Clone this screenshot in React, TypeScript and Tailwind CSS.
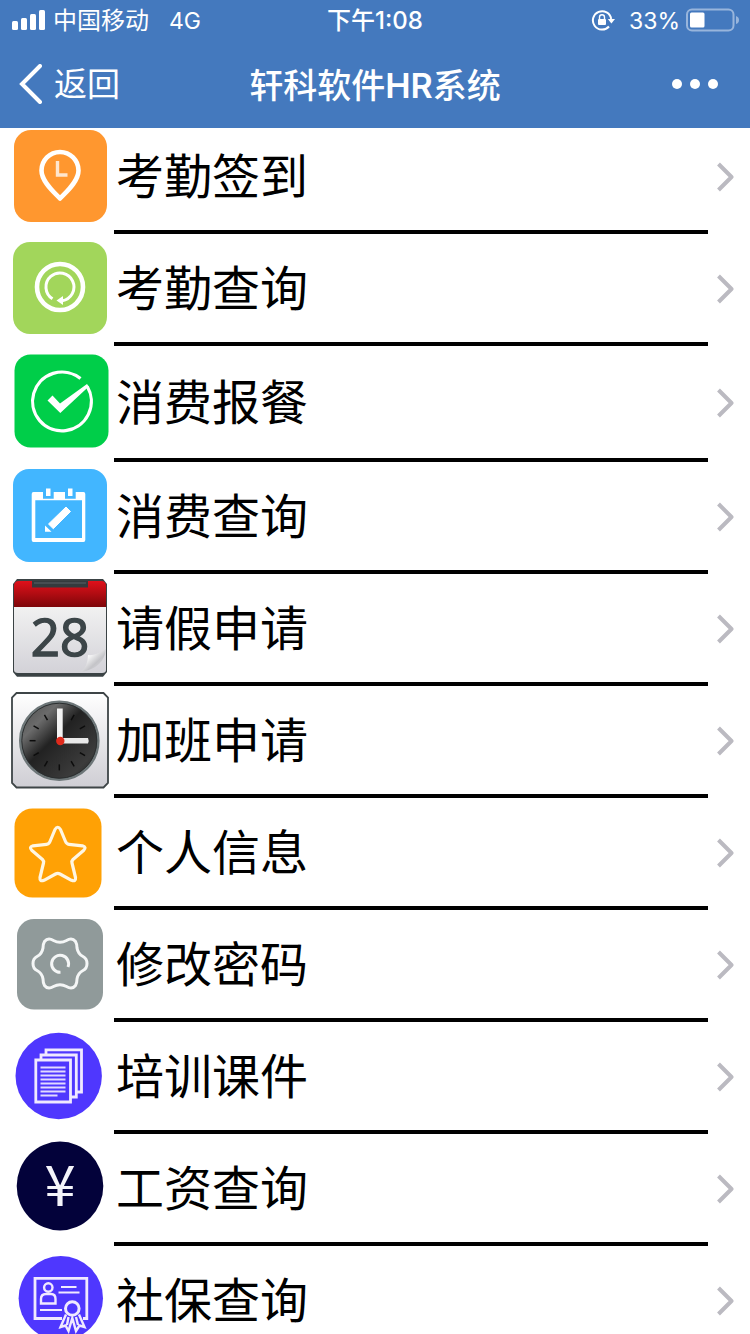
import type { ReactNode } from 'react'

function Icon({ children }: { children: ReactNode }) {
  return (
    <svg viewBox="0 0 100 100" className="size-[100px]" fill="none" aria-hidden="true">
      {children}
    </svg>
  )
}

const signInIcon = (
  <Icon>
    <rect x="4" y="4" width="93" height="92" rx="17" fill="#ff972f" />
    <path
      d="M50 72.5C45 67 31.5 56 31.5 44.5A18.5 18.5 0 0 1 68.5 44.5C68.5 56 55 67 50 72.5Z"
      stroke="#fff"
      strokeWidth="4.6"
      strokeLinejoin="round"
    />
    <path d="M47.5 35V49H57.5" stroke="#ffe6cd" strokeWidth="3.4" />
  </Icon>
)

const attendanceIcon = (
  <Icon>
    <rect x="3" y="4" width="94" height="92" rx="17" fill="#a2d65b" />
    <circle cx="50" cy="49" r="23" stroke="#fff" strokeWidth="4.6" />
    <path d="M42.5 60.8A14 14 0 1 1 52 62.8" stroke="#fff" strokeWidth="3" />
    <path d="M46.5 62.5L53 58V67Z" fill="#fff" />
  </Icon>
)

const mealIcon = (
  <Icon>
    <rect x="4.5" y="2.5" width="94" height="93" rx="16" fill="#00ce49" />
    <path d="M70.5 26.6A29.4 29.4 0 1 0 77.3 34.5" stroke="#fff" strokeWidth="3.2" />
    <path d="M37.5 48.5L42.5 43.5L50 51.5L77 32L78.8 34.5L50.3 61Z" fill="#fff" />
  </Icon>
)

const consumeIcon = (
  <Icon>
    <rect x="3" y="3" width="94" height="93" rx="16" fill="#42b6ff" />
    <path
      fillRule="evenodd"
      d="M23.5 26H33V32.7H43.7V26H55V32.7H65.7V26H73.5Q75.3 26 75.3 28V74Q75.3 76 73.5 76H23.5Q21.7 76 21.7 74V28Q21.7 26 23.5 26ZM25.3 34.3V72H72V34.3Z"
      fill="#fff"
    />
    <path d="M36 22.5H40.5V30H36ZM58 22.5H62.5V30H58Z" fill="#fff" />
    <path d="M56 41L60.5 45.5L43.3 62.7L38.5 58Z" fill="#fff" stroke="#fff" strokeLinejoin="round" />
    <path d="M35 59.5L41.5 65.8H35Z" fill="#fff" />
  </Icon>
)

const leaveIcon = (
  <Icon>
    <defs>
      <linearGradient id="leave-red" x1="0" y1="0" x2="0" y2="1">
        <stop offset="0" stopColor="#e0101a" />
        <stop offset="0.5" stopColor="#b00c12" />
        <stop offset="1" stopColor="#7d0509" />
      </linearGradient>
      <linearGradient id="leave-page" x1="0" y1="0" x2="0" y2="1">
        <stop offset="0" stopColor="#f1f1f1" />
        <stop offset="1" stopColor="#d3d2d8" />
      </linearGradient>
      <linearGradient id="leave-curl" x1="0" y1="0" x2="1" y2="1">
        <stop offset="0.3" stopColor="#fafafa" />
        <stop offset="0.6" stopColor="#c4c4c8" />
        <stop offset="1" stopColor="#e6e6ea" />
      </linearGradient>
    </defs>
    <path d="M7 1H93L97 6V94L93 98.7H7L3 94V6Z" fill="#3a4244" />
    <path d="M4 29H96V92Q96 95 92 95H8Q4 95 4 92Z" fill="url(#leave-page)" />
    <path d="M4 29V8Q4 3 9 3H91Q96 3 96 8V29Z" fill="url(#leave-red)" />
    <path d="M22 3H78V9.5H22Z" fill="#343b3e" />
    <path d="M24 5H76" stroke="#5b6366" />
    <text
      x="50"
      y="78"
      textAnchor="middle"
      fill="#3c4548"
      stroke="#3c4548"
      strokeWidth="1.5"
      className="font-['Open_Sans','Noto_Sans',sans-serif] text-[51px] font-normal"
    >
      28
    </text>
    <path d="M71 94Q78 88 78 77Q86 78 96 71Q94 90 71 94Z" fill="url(#leave-curl)" />
  </Icon>
)

const ticks = [30, 60, 90, 120, 150, 180, 210, 240, 270, 300, 330]

const overtimeIcon = (
  <Icon>
    <defs>
      <linearGradient id="clock-case" x1="0" y1="0" x2="0" y2="1">
        <stop offset="0" stopColor="#ffffff" />
        <stop offset="1" stopColor="#cfced4" />
      </linearGradient>
      <linearGradient id="clock-face" x1="0" y1="0" x2="1" y2="1">
        <stop offset="0" stopColor="#4a4a4a" />
        <stop offset="0.25" stopColor="#6b6b6b" />
        <stop offset="0.45" stopColor="#222222" />
        <stop offset="0.8" stopColor="#3c3c3c" />
        <stop offset="1" stopColor="#1c1c1c" />
      </linearGradient>
    </defs>
    <path
      d="M6.5 3H93.5L98 7.5V93L93.5 97.5H6.5L2 93V7.5Z"
      fill="url(#clock-case)"
      stroke="#3e4547"
      strokeWidth="1.8"
    />
    <circle cx="49.3" cy="50.7" r="39" fill="url(#clock-face)" stroke="#6d7678" strokeWidth="2.6" />
    <circle cx="49.3" cy="50.7" r="37.5" stroke="#2a2e2f" />
    {ticks.map((angle) => (
      <path key={angle} d="M49.3 21V27" stroke="#0c0c0c" strokeWidth="1.5" transform={`rotate(${angle} 49.3 50.7)`} />
    ))}
    <path d="M47 18.5H52.7V50H47Z" fill="#f3f3f3" />
    <path d="M50 48H78Q79.5 50.8 78 53.6H50Z" fill="#e9e9e9" />
    <circle cx="50.3" cy="51" r="4.2" fill="#e02a1c" />
  </Icon>
)

const profileIcon = (
  <Icon>
    <rect x="4.5" y="6.5" width="87" height="89" rx="18" fill="#ffa105" />
    <path
      d="M45 27.5Q47.7 23 50.5 27.5L55.5 39.5Q56.5 42 59 42.3L72.5 43.8Q77 45 73.5 48.5L63 57.5Q61.5 59 62 61L65.5 75.5Q66 80 61.5 78.3L50 72Q47.7 70.8 45.5 72L34 78.3Q29.5 80 30 75.5L33.5 61Q34 59 32.5 57.5L22 48.5Q18.5 45 23 43.8L36.5 42.3Q39 42 40 39.5Z"
      stroke="#fff6e2"
      strokeWidth="3.2"
      strokeLinejoin="round"
    />
  </Icon>
)

const passwordIcon = (
  <Icon>
    <rect x="7" y="5" width="86" height="90.5" rx="17" fill="#909a9a" />
    <path
      d="M43.5 26.5Q50 30 56.5 26.5Q62 23 65.5 27.5Q67 30 67 34Q68 40 73 42.5Q77 44.5 77 49.5Q77 54.5 73 56.5Q68 59 67 65Q67 69 65.5 71.5Q62 76 56.5 72.5Q50 69 43.5 72.5Q38 76 34.5 71.5Q33 69 33 65Q32 59 27 56.5Q23 54.5 23 49.5Q23 44.5 27 42.5Q32 40 33 34Q33 30 34.5 27.5Q38 23 43.5 26.5Z"
      stroke="#f4f6f6"
      strokeWidth="3"
    />
    <path d="M50.5 58.3A8.5 8.5 0 1 1 58 53" stroke="#f4f6f6" strokeWidth="3" />
  </Icon>
)

const trainingIcon = (
  <Icon>
    <circle cx="48.7" cy="50" r="43.2" fill="#4f37fe" />
    <g stroke="#f0e9ff" strokeWidth="2.8">
      <path d="M25.8 34H60.5V76H25.8Z" />
      <path d="M31 33V29H66.3V71H61" />
      <path d="M36 28V23.8H71.5V66H67" />
    </g>
    <path
      d="M30.5 41.5H55.5M30.5 45.5H55.5M30.5 49.5H55.5M30.5 53.5H55.5M30.5 57.5H55.5M30.5 61.5H55.5M30.5 65.5H55.5M30.5 69.5H47.5"
      stroke="#e2d9ff"
      strokeWidth="1.8"
    />
  </Icon>
)

const salaryIcon = (
  <Icon>
    <ellipse cx="50" cy="48" rx="43.3" ry="44.5" fill="#03023a" />
    <text
      x="50"
      y="68"
      textAnchor="middle"
      fill="#f4f4fa"
      className="font-['Noto_Sans_CJK_SC',sans-serif] text-[56px] font-normal"
    >
      ¥
    </text>
  </Icon>
)

const insuranceIcon = (
  <Icon>
    <circle cx="50.8" cy="48.2" r="42.2" fill="#4f37fe" />
    <g stroke="#f0e9ff" strokeWidth="2.4">
      <path d="M52 68.5H25V28.3H76.8V68.5H73" strokeWidth="2.8" />
      <circle cx="38.3" cy="37.5" r="4.2" />
      <path d="M31 53.5V49Q31 44 36 44H41Q45.5 44 45.5 49V53.5Z" />
      <path d="M51 37H66.5M48.5 42.5H69.5M30 60H52" strokeWidth="1.8" />
      <circle cx="62.3" cy="58.5" r="6.8" strokeWidth="3" />
      <path d="M56 64.5L50.5 77L55.5 75.5L58.5 81L62.3 68L66 81L69.5 75.5L74.5 77L69 64.5M58.5 67L57 75M66 67L68 75" />
    </g>
  </Icon>
)

interface MenuItem {
  id: string
  label: string
  icon: ReactNode
  tall?: boolean
}

const menuItems: MenuItem[] = [
  { id: 'sign-in', label: '考勤签到', icon: signInIcon },
  { id: 'attendance', label: '考勤查询', icon: attendanceIcon },
  { id: 'meal', label: '消费报餐', icon: mealIcon, tall: true },
  { id: 'consume', label: '消费查询', icon: consumeIcon },
  { id: 'leave', label: '请假申请', icon: leaveIcon },
  { id: 'overtime', label: '加班申请', icon: overtimeIcon },
  { id: 'profile', label: '个人信息', icon: profileIcon },
  { id: 'password', label: '修改密码', icon: passwordIcon },
  { id: 'training', label: '培训课件', icon: trainingIcon },
  { id: 'salary', label: '工资查询', icon: salaryIcon },
  { id: 'insurance', label: '社保查询', icon: insuranceIcon },
]

function StatusBar() {
  return (
    <div className="grid h-10 grid-cols-[1fr_auto_1fr] items-center text-2xl">
      <div className="flex items-center pl-3">
        <svg viewBox="0 0 33 20" className="mr-2 h-5 w-[33px]" fill="#fff" aria-hidden="true">
          <rect x="0" y="11" width="6" height="9" rx="1.5" />
          <rect x="9" y="8" width="6" height="12" rx="1.5" />
          <rect x="18" y="4" width="6" height="16" rx="1.5" />
          <rect x="27" y="0" width="6" height="20" rx="1.5" />
        </svg>
        <span className="pt-0.5">中国移动</span>
        <span className="ml-5 pt-0.5 text-[23px]">4G</span>
      </div>
      <div className="pt-0.5 font-medium">下午1:08</div>
      <div className="flex items-center justify-end pr-2.5">
        <svg viewBox="0 0 24 22" className="mr-3.5 h-[22px] w-6" fill="none" aria-hidden="true">
          <path d="M18 17.5A9.2 9.2 0 1 1 20.2 10" stroke="#fff" strokeWidth="2" />
          <path d="M16.8 10H24L20.4 14.5Z" fill="#fff" />
          <rect x="7" y="10" width="8" height="6" rx="1" fill="#fff" />
          <path d="M8.5 10V8.2A2.5 2.5 0 0 1 13.5 8.2V10" stroke="#fff" strokeWidth="1.4" />
        </svg>
        <span className="mr-1.5 pt-0.5 text-[23px]">33%</span>
        <svg viewBox="0 0 54 24" className="h-6 w-[54px]" fill="none" aria-hidden="true">
          <rect x="1" y="1.5" width="46.5" height="21" rx="5" stroke="#98b5dc" strokeWidth="2" />
          <rect x="4" y="4.5" width="14.5" height="15" rx="1.5" fill="#fff" />
          <path d="M50 8Q53 9 53 12Q53 15 50 16Z" fill="#98b5dc" />
        </svg>
      </div>
    </div>
  )
}

function NavBar() {
  return (
    <div className="grid h-[88px] grid-cols-[1fr_auto_1fr] items-center">
      <button type="button" className="flex items-center justify-self-start pl-[18px]">
        <svg viewBox="0 0 24 40" className="mr-3 h-10 w-6" fill="none" aria-hidden="true">
          <path d="M22 2L4 20L22 38" stroke="#fff" strokeWidth="4" strokeLinecap="round" />
        </svg>
        <span className="pt-0.5 text-[33px]">返回</span>
      </button>
      <h1 className="pt-0.5 text-[34px] font-medium">
        轩科软件<span className="font-semibold">HR</span>系统
      </h1>
      <button type="button" aria-label="更多" className="flex gap-2 justify-self-end pr-8">
        <span className="size-2.5 rounded-full bg-white" />
        <span className="size-2.5 rounded-full bg-white" />
        <span className="size-2.5 rounded-full bg-white" />
      </button>
    </div>
  )
}

function MenuRow({ item }: { item: MenuItem }) {
  return (
    <li>
      <a
        href={`#${item.id}`}
        className={`grid grid-cols-[114px_1fr_42px] ${item.tall ? 'h-[116px]' : 'h-28'}`}
      >
        <span className="flex items-center pb-1 pl-2.5">{item.icon}</span>
        <span className="flex items-center border-b-4 border-black pt-0.5 pl-0.5 text-5xl">{item.label}</span>
        <span className="flex items-center pb-1 pl-2">
          <svg viewBox="0 0 18 32" className="h-8 w-[18px]" fill="none" aria-hidden="true">
            <path d="M2.5 4L15.5 17L2.5 30" stroke="#bbbac1" strokeWidth="4" strokeLinejoin="round" />
          </svg>
        </span>
      </a>
    </li>
  )
}

export default function App() {
  return (
    <div className="flex h-screen flex-col overflow-hidden bg-white font-[Inter,'Noto_Sans_CJK_SC',sans-serif] text-black">
      <header className="z-10 shrink-0 bg-[#4479be] text-white">
        <StatusBar />
        <NavBar />
      </header>
      <main className="-mt-1.5 flex-1 overflow-y-auto [scrollbar-width:none]">
        <ul>
          {menuItems.map((item) => (
            <MenuRow key={item.id} item={item} />
          ))}
        </ul>
      </main>
    </div>
  )
}
